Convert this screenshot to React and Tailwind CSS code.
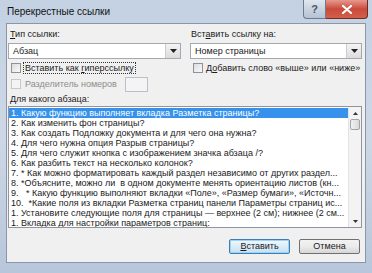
import React from 'react';

const items = [
  '1. Какую функцию выполняет вкладка Разметка страницы?',
  '2. Как изменить фон страницы?',
  '3. Как создать Подложку документа и для чего она нужна?',
  '4. Для чего нужна опция Разрыв страницы?',
  '5. Для чего служит кнопка с изображением значка абзаца /?',
  '6. Как разбить текст на несколько колонок?',
  '7. * Как можно форматировать каждый раздел независимо от других раздел...',
  '8. *Объясните, можно ли  в одном документе менять ориентацию листов (кн...',
  '9.   * Какую функцию выполняют вкладки «Поле», «Размер бумаги», «Источн...',
  '10.  *Какие поля из вкладки Разметка страниц панели Параметры страниц ис...',
  '1. Установите следующие поля для страницы — верхнее (2 см); нижнее (2 см...',
  '1. Вкладка для настройки параметров страниц:',
];

function Combo({ value, className }) {
  return (
    <div className={`flex h-[16px] items-center border border-[#a4a9b0] bg-white ${className}`}>
      <span className="flex-1 pl-[4px] leading-none">{value}</span>
      <div className="flex h-full w-[15px] items-center justify-center border-l border-[#c9ccd1] bg-gradient-to-b from-[#f4f4f4] to-[#dcdcdc]">
        <svg width="7" height="4" viewBox="0 0 7 4"><path d="M0 0h7L3.5 4z" fill="#222" /></svg>
      </div>
    </div>
  );
}

function Check({ disabled }) {
  return (
    <div
      className={`h-[10px] w-[10px] shrink-0 border ${
        disabled ? 'border-[#c6c9cc] bg-[#f4f4f4]' : 'border-[#8e9399] bg-gradient-to-br from-[#dcdcdc] to-[#fafafa]'
      }`}
    />
  );
}

export default function App() {
  return (
    <div
      className="relative h-[273px] w-[372px] overflow-hidden bg-gradient-to-b from-[#c3d1e3] via-[#cdd8e6] to-[#b7c6da] text-[9px] text-[#1a1a1a]"
      style={{ fontFamily: '"Liberation Sans", Arial, sans-serif' }}
    >
      {/* Заголовок */}
      <div className="flex h-[23px] items-start">
        <span className="pl-[7px] pt-[7px] text-[10px] leading-none text-[#111]">Перекрестные ссылки</span>
        <div className="ml-auto mr-[4px] flex">
          <div className="flex h-[19px] w-[23px] items-center justify-center rounded-bl-[4px] border border-t-0 border-[#6d7b8e] bg-gradient-to-b from-[#dfe6ef] to-[#b5c2d3] text-[11px] font-bold text-[#4a5566]">
            ?
          </div>
          <div className="flex h-[19px] w-[42px] items-center justify-center rounded-br-[4px] border border-l-0 border-t-0 border-[#6e2a24] bg-gradient-to-b from-[#e5988d] via-[#c94a3b] to-[#d25f4a]">
            <svg width="10" height="9" viewBox="0 0 10 9">
              <path d="M1 1l8 7M9 1L1 8" stroke="#fff" strokeWidth="2.2" strokeLinecap="round" />
            </svg>
          </div>
        </div>
      </div>

      {/* Содержимое */}
      <div className="mx-[6px] h-[240px] border border-[#8b97a8] bg-[#f0f0f0] px-[1px]">
        <div className="grid grid-cols-[173px_1fr] gap-x-[9px] pt-[6px]">
          <div>
            <div className="mb-[4px] h-[9px] pl-[2px] leading-[9px]">
              <span className="underline">Т</span>ип ссылки:
            </div>
            <Combo value="Абзац" />
          </div>
          <div>
            <div className="mb-[4px] h-[9px] pl-[1px] leading-[9px]">
              Вст<span className="underline">а</span>вить ссылку на:
            </div>
            <Combo value="Номер страницы" className="mr-[2px]" />
          </div>
        </div>

        <div className="mt-[3px] grid h-[12px] grid-cols-[182px_1fr]">
          <div className="flex items-center gap-[2px] pl-[3px]">
            <Check />
            <span className="border border-dotted border-[#333] px-[1px] leading-[10px]">
              Вставить как <span className="underline">г</span>иперссылку
            </span>
          </div>
          <div className="flex items-center gap-[3px] pl-[3px]">
            <Check />
            <span className="whitespace-nowrap leading-[10px]">
              Д<span className="underline">о</span>бавить слово «выше» или «ниже»
            </span>
          </div>
        </div>

        <div className="mt-[2px] flex h-[16px] items-center pl-[3px]">
          <Check disabled />
          <span className="ml-[4px] w-[100px] leading-[10px] text-[#8d8d8d]">Разделитель номеров</span>
          <div className="h-[15px] w-[23px] border border-[#b9c0c9] bg-[#f4f4f4]" />
        </div>

        <div className="mt-[2px] h-[11px] pl-[2px] leading-[11px]">
          <span className="underline">Д</span>ля какого абзаца:
        </div>

        {/* Список */}
        <div className="mt-[1px] mr-[2px] flex h-[122px] border border-[#8e959e] bg-white">
          <div className="min-w-0 flex-1 overflow-hidden pt-[1px]">
            {items.map((t, i) => (
              <div
                key={i}
                className={`h-[10px] overflow-hidden whitespace-pre pl-[2px] leading-[10px] ${
                  i === 0 ? 'bg-[#3591eb] text-white' : ''
                }`}
              >
                {t}
              </div>
            ))}
          </div>
          <div className="flex w-[13px] flex-col border-l border-[#e4e4e4] bg-[#f3f3f3]">
            <div className="flex h-[12px] items-center justify-center">
              <svg width="5" height="3" viewBox="0 0 5 3"><path d="M0 3h5L2.5 0z" fill="#333" /></svg>
            </div>
            <div className="mx-[1px] h-[11px] rounded-[2px] border border-[#9ea4ab] bg-gradient-to-r from-[#f2f2f2] to-[#d9d9d9]" />
            <div className="flex-1" />
            <div className="flex h-[12px] items-center justify-center">
              <svg width="5" height="3" viewBox="0 0 5 3"><path d="M0 0h5L2.5 3z" fill="#333" /></svg>
            </div>
          </div>
        </div>

        {/* Кнопки */}
        <div className="mt-[11px] mr-[4px] flex justify-end gap-[9px]">
          <div className="flex h-[15px] w-[61px] items-center justify-center rounded-[2px] border border-[#3c7fb1] bg-gradient-to-b from-[#f2f8fc] via-[#dcecf8] to-[#c4e0f3] leading-none shadow-[inset_0_0_0_1px_#9ed3f7]">
            <span className="underline">В</span>ставить
          </div>
          <div className="flex h-[15px] w-[61px] items-center justify-center rounded-[2px] border border-[#707070] bg-gradient-to-b from-[#f2f2f2] via-[#ebebeb] to-[#d6d6d6] leading-none">
            Отмена
          </div>
        </div>
      </div>
    </div>
  );
}
